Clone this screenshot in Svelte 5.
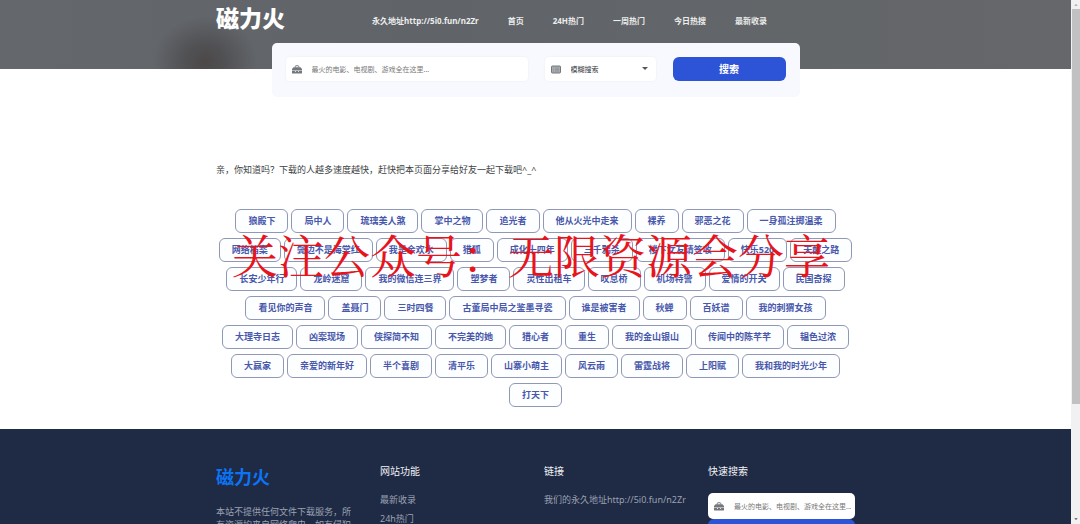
<script>
	let keyword = $state('');
	let quickKeyword = $state('');
	let mode = $state('fuzzy');

	const placeholder = '最火的电影、电视剧、游戏全在这里...';

	const nav = ['永久地址http://5i0.fun/n2Zr', '首页', '24H热门', '一周热门', '今日热搜', '最新收录'];

	const tags = [
		'狼殿下', '局中人', '琉璃美人煞', '掌中之物', '追光者', '他从火光中走来', '裸养', '邪恶之花', '一身孤注掷温柔',
		'网络档案', '鬓边不是海棠红', '我是余欢水', '猎狐', '成化十四年', '三千鸦杀', '楼下女友请签收', '快乐520', '天醒之路',
		'长安少年行', '龙岭迷窟', '我的微信连三界', '塑梦者', '灵性出租车', '叹息桥', '机场特警', '爱情的开关', '民国奇探',
		'看见你的声音', '盖聂门', '三时四餐', '古董局中局之鉴墨寻瓷', '谁是被害者', '秋蝉', '百妖谱', '我的刺猬女孩',
		'大理寺日志', '凶案现场', '侠探简不知', '不完美的她', '猎心者', '重生', '我的金山银山', '传闻中的陈芊芊', '韫色过浓',
		'大赢家', '亲爱的新年好', '半个喜剧', '清平乐', '山寨小萌主', '风云雨', '雷霆战将', '上阳赋', '我和我的时光少年',
		'打天下'
	];
</script>

{#snippet briefcase()}
	<svg class="icon" viewBox="0 0 20 18" aria-hidden="true">
		<path d="M6.500 5V3a1.500 1.500 0 0 1 1.500-1.500h4A1.500 1.500 0 0 1 13.500 3v2" fill="none" stroke="currentColor" stroke-width="2" />
		<path d="M3 4.500h14L20 8v3H0V8z" fill="currentColor" />
		<path d="M0 12h6v1.500h2V12h4v1.500h2V12h6v4a1 1 0 0 1-1 1H1a1 1 0 0 1-1-1z" fill="currentColor" />
	</svg>
{/snippet}

<div class="page">
	<div class="content">
		<header>
			<div class="container bar">
				<a class="logo" href="/">磁力火</a>
				<nav>
					{#each nav as item}
						<a href="/">{item}</a>
					{/each}
				</nav>
			</div>
		</header>

		<form class="search" onsubmit={(e) => e.preventDefault()}>
			<label class="field">
				{@render briefcase()}
				<input type="text" aria-label="关键词" {placeholder} bind:value={keyword} />
			</label>
			<label class="field">
				<svg class="icon" viewBox="0 0 20 18" aria-hidden="true">
					<rect x="1" y="2" width="18" height="14" rx="1.500" fill="#a9adb0" stroke="currentColor" stroke-width="2" />
					<path d="M4 6h2M8 6h8M4 9h2M8 9h8M4 12h2M8 12h8" stroke="#8b8f93" stroke-width="1.500" />
				</svg>
				<select aria-label="搜索方式" bind:value={mode}>
					<option value="fuzzy">模糊搜索</option>
					<option value="exact">精确搜索</option>
				</select>
				<svg class="caret" viewBox="0 0 6 4" aria-hidden="true"><path d="M0 0h6L3 3z" fill="#555" /></svg>
			</label>
			<button type="submit">搜索</button>
		</form>

		<main class="container">
			<p class="tip">亲，你知道吗？下载的人越多速度越快，赶快把本页面分享给好友一起下载吧^_^</p>
			<div class="tags">
				{#each tags as tag}
					<a href="/">{tag}</a>
				{/each}
				<div class="watermark">关注公众号：无限资源会分享</div>
			</div>
		</main>

		<footer>
			<div class="container columns">
				<section>
					<a class="footer-logo" href="/">磁力火</a>
					<p>本站不提供任何文件下载服务，所有资源均来自网络爬虫，如有侵犯</p>
				</section>
				<section>
					<h4>网站功能</h4>
					<ul>
						<li><a href="/">最新收录</a></li>
						<li><a href="/">24h热门</a></li>
					</ul>
				</section>
				<section>
					<h4>链接</h4>
					<ul>
						<li><a href="/">我们的永久地址http://5i0.fun/n2Zr</a></li>
					</ul>
				</section>
				<section>
					<h4>快速搜索</h4>
					<form class="quick" onsubmit={(e) => e.preventDefault()}>
						<label class="field">
							{@render briefcase()}
							<input type="text" aria-label="快速搜索" {placeholder} bind:value={quickKeyword} />
						</label>
						<button type="submit">搜索</button>
					</form>
				</section>
			</div>
		</footer>
	</div>

	<div class="scrollbar" aria-hidden="true">
		<svg viewBox="0 0 9 9"><path d="M2.500 6h4l-2-2z" fill="#a0a0a0" /></svg>
		<div class="track"><div class="thumb"></div></div>
		<svg viewBox="0 0 9 9"><path d="M2.500 3h4l-2 2z" fill="#505050" /></svg>
	</div>
</div>

<style>
	:global(body) {
		margin: 0;
		background: #fff;
	}

	.page {
		display: flex;
		height: 100vh;
		overflow: hidden;
		font-family: 'Noto Sans', 'Noto Sans CJK SC', sans-serif;
		font-size: 9px;
		color: #3c3f44;
	}

	.page * {
		box-sizing: border-box;
	}

	a {
		color: inherit;
		text-decoration: none;
	}

	.content {
		flex: 1;
		min-width: 0;
		overflow: hidden;
	}

	.container {
		max-width: 639px;
		margin: 0 auto;
	}

	header {
		height: 69px;
		background:
			radial-gradient(ellipse 52px 46px at 205px 62px, #4d4848, #505053 35%, transparent),
			linear-gradient(90deg, #64676c, #606468 40%, #65676a);
	}

	.bar {
		display: flex;
		align-items: center;
		height: 40px;
	}

	.logo {
		width: 156px;
		padding-bottom: 4px;
		font-size: 23px;
		line-height: 36px;
		font-weight: 900;
		color: #fff;
	}

	nav {
		display: flex;
		gap: 29px;
		font-size: 8px;
		font-weight: 700;
		color: #eceded;
		white-space: nowrap;
	}

	.search {
		position: relative;
		display: grid;
		grid-template-columns: 242fr 111fr 113fr;
		gap: 17px;
		max-width: 528px;
		margin: -26px auto 0;
		padding: 14px 14px 16px;
		border-radius: 5px;
		background: #f8f9fe;
	}

	.field {
		display: flex;
		align-items: center;
		gap: 10px;
		min-width: 0;
		height: 24px;
		padding: 0 8px 0 6px;
		border-radius: 4px;
		background: #fff;
		color: #74787c;
		box-shadow: 0 0 2px #e9ebf3;
	}

	.icon {
		flex: none;
		width: 10px;
		height: 9px;
	}

	.caret {
		flex: none;
		width: 6px;
		height: 4px;
	}

	input,
	select {
		flex: 1;
		min-width: 0;
		height: 20px;
		padding: 0;
		border: 0;
		outline: 0;
		background: transparent;
		font-family: inherit;
		font-size: 7px;
		color: #33363a;
	}

	select {
		appearance: none;
	}

	input::placeholder {
		color: #777;
		opacity: 1;
	}

	button {
		height: 24px;
		padding: 0;
		border: 0;
		border-radius: 6px;
		background: #2d53d6;
		font-family: inherit;
		font-size: 10px;
		font-weight: 700;
		line-height: 20px;
		color: #fff;
	}

	.tip {
		margin: 66px 0 32px;
		line-height: 14px;
	}

	.tags {
		position: relative;
		display: flex;
		flex-wrap: wrap;
		justify-content: center;
		gap: 5px 3px;
		padding-bottom: 22px;
	}

	.tags a {
		height: 24px;
		padding: 0 12px;
		border: 1px solid #8f98b6;
		border-radius: 6px;
		background: #fdfeff;
		line-height: 22px;
		font-weight: 700;
		color: #4858ac;
	}

	.watermark {
		position: absolute;
		top: 14px;
		left: 16px;
		font-family: 'Noto Serif CJK SC', 'Noto Sans CJK SC', serif;
		font-size: 46px;
		font-weight: 400;
		line-height: 60px;
		color: #e8141c;
		white-space: nowrap;
		pointer-events: none;
	}

	footer {
		padding: 35px 0;
		background: #1f2a44;
		color: #9ba2b3;
	}

	.columns {
		display: grid;
		grid-template-columns: repeat(4, minmax(0, 1fr));
		gap: 17px;
	}

	.footer-logo {
		display: block;
		font-size: 18px;
		line-height: 26px;
		font-weight: 700;
		color: #0b74f5;
	}

	footer p {
		margin: 15px 0 0;
		padding-right: 8px;
		line-height: 13px;
	}

	h4 {
		margin: 0;
		font-size: 10px;
		line-height: 14px;
		font-weight: 400;
		color: #f0f2f5;
	}

	ul {
		margin: 12px 0 0;
		padding: 0;
		list-style: none;
		line-height: 19px;
		white-space: nowrap;
	}

	.quick {
		display: flex;
		flex-direction: column;
		margin-top: 15px;
	}

	.quick .field {
		height: 26px;
		padding-right: 4px;
		border-radius: 5px;
		box-shadow: none;
	}

	.scrollbar {
		display: flex;
		flex-direction: column;
		width: 9px;
		padding-left: 1px;
		background: #f1f1f1;
	}

	.scrollbar svg {
		height: 9px;
	}

	.track {
		flex: 1;
	}

	.thumb {
		height: 78%;
		background: #c1c1c1;
	}
</style>
